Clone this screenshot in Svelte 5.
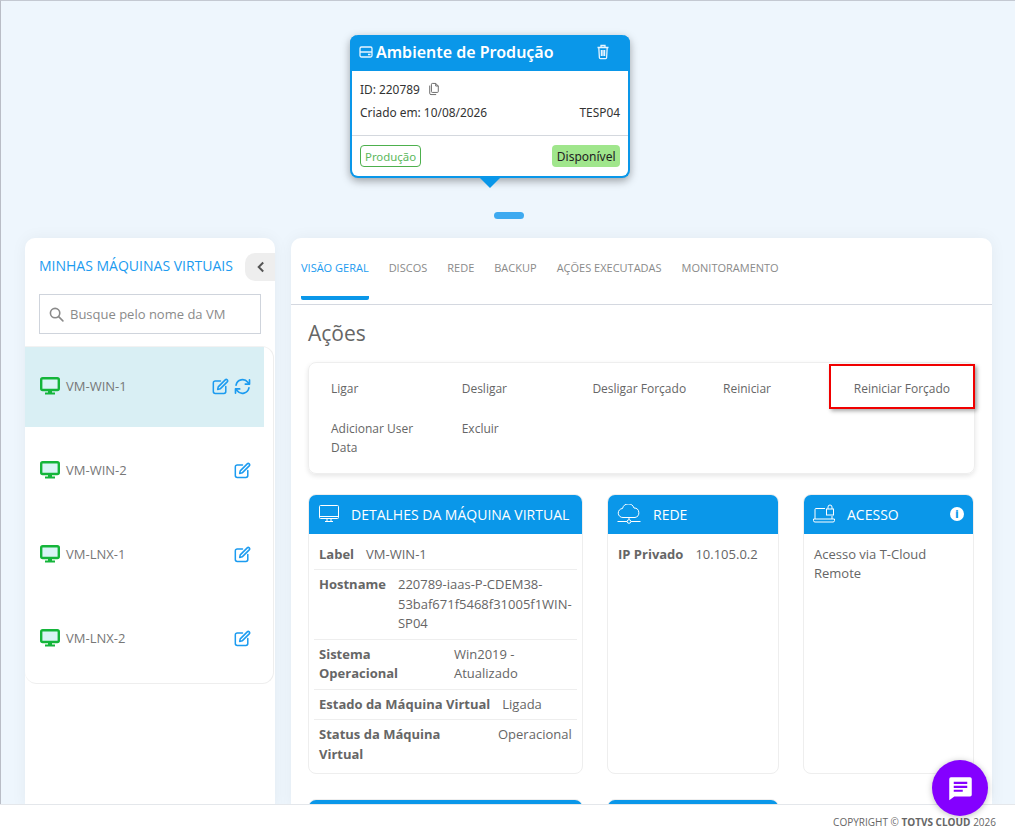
<script>
	const actions = ['Ligar', 'Desligar', 'Desligar Forçado', 'Reiniciar', 'Reiniciar Forçado', 'Adicionar User Data', 'Excluir'];
	const tabs = ['Visão Geral', 'Discos', 'Rede', 'Backup', 'Ações Executadas', 'Monitoramento'];
	const vms = ['VM-WIN-1', 'VM-WIN-2', 'VM-LNX-1', 'VM-LNX-2'];
</script>

{#snippet edit()}
	<svg class="ico" viewBox="0 0 18 18" fill="none" stroke="currentColor" stroke-width="1.6">
		<path d="M9 3.2H3.4A2 2 0 0 0 1.4 5.2v9.2a2 2 0 0 0 2 2h9.2a2 2 0 0 0 2-2V9" stroke-linecap="round" />
		<path d="M6.6 9.4 14 2a1.5 1.5 0 0 1 2.1 0 1.5 1.5 0 0 1 0 2.100L8.700 11.500l-2.700.6z" stroke-linejoin="round" />
	</svg>
{/snippet}

<div class="page">
	<main>
		<div class="env">
			<div class="env-head">
				<svg class="env-ico" viewBox="0 0 14 14" fill="none" stroke="currentColor" stroke-width="1.3">
					<rect x="1" y="2" width="12" height="10" rx="1.500" />
					<path d="M1 7h12M9 9.500h2.500" />
				</svg>
				<span class="env-title">Ambiente de Produção</span>
				<svg class="trash" viewBox="0 0 14 16" fill="none" stroke="currentColor" stroke-width="1.300">
					<path d="M1.500 3.500h11M5 3.200V1.500h4v1.700M2.800 3.500l.6 10.200a1 1 0 0 0 1 .9h5.200a1 1 0 0 0 1-.9l.6-10.200" />
					<path d="M5.400 6v6M7 6v6M8.600 6v6" />
				</svg>
			</div>
			<div class="env-body">
				<div class="env-line">
					<span>ID: 220789</span>
					<svg class="copy" viewBox="0 0 14 16" fill="none" stroke="currentColor" stroke-width="1.100">
						<path d="M5 1.500h4l3 3v6.500a1 1 0 0 1-1 1H5a1 1 0 0 1-1-1v-8.500a1 1 0 0 1 1-1z" />
						<path d="M9 1.500v3h3M2 4v9a1.500 1.500 0 0 0 1.500 1.500h6" />
					</svg>
				</div>
				<div class="env-line between"><span>Criado em: 10/08/2026</span><span>TESP04</span></div>
			</div>
			<div class="env-foot">
				<span class="tag">Produção</span>
				<span class="status">Disponível</span>
			</div>
			<div class="arrow"></div>
		</div>
		<div class="pill"></div>

		<div class="panels">
			<aside class="side">
				<div class="side-head">
					<h2>Minhas Máquinas Virtuais</h2>
					<button class="collapse" aria-label="Recolher">
						<svg viewBox="0 0 10 12" width="9" height="12" fill="none" stroke="currentColor" stroke-width="2.200"><path d="M8 1 3 6l5 5" /></svg>
					</button>
				</div>
				<div class="search">
					<svg viewBox="0 0 16 16" width="15" height="15" fill="none" stroke="currentColor" stroke-width="1.700"><circle cx="6.500" cy="6.500" r="5" /><path d="m10.300 10.300 4.500 4.500" stroke-linecap="round" /></svg>
					<span>Busque pelo nome da VM</span>
				</div>
				<ul class="vms">
					{#each vms as vm, i}
						<li class:active={i === 0}>
							<svg class="monitor" viewBox="0 0 20 18" fill="none">
								<rect x="1.200" y="1.200" width="17.600" height="11.800" rx="1.500" stroke="#14b53a" stroke-width="2.400" fill="#d9f4f6" />
								<path d="M8 14h4v2H8zM5 15.600h10v2H5z" fill="#14b53a" />
							</svg>
							<span class="vm-name">{vm}</span>
							<span class="vm-actions">
								{@render edit()}
								{#if i === 0}
									<svg class="ico" viewBox="0 0 18 18" fill="none" stroke="currentColor" stroke-width="1.800" stroke-linecap="round">
										<path d="M2.200 7.500A7 7 0 0 1 14.600 4.500L16 6.200" />
										<path d="M16.400 2v4.400H12" stroke-linejoin="round" />
										<path d="M15.800 10.500A7 7 0 0 1 3.400 13.500L2 11.800" />
										<path d="M1.600 16v-4.400H6" stroke-linejoin="round" />
									</svg>
								{/if}
							</span>
						</li>
					{/each}
				</ul>
			</aside>

			<section class="content">
				<nav class="tabs">
					{#each tabs as tab, i}
						<span class="tab" class:on={i === 0}>{tab}</span>
					{/each}
				</nav>
				<div class="inner">
					<h1>Ações</h1>
					<div class="actions">
						{#each actions as action}
							<span>{action}</span>
						{/each}
						<div class="highlight"></div>
					</div>

					<div class="cards">
						<div class="card">
							<header>
								<svg class="card-ico monitor-ico" viewBox="0 0 20 18" fill="none" stroke="currentColor"><rect x=".5" y=".5" width="19" height="13" rx="1" /><path d="M.5 11.500h19M8 14v2M12 14v2M6 16.500h8" /></svg>
								<span>Detalhes da Máquina Virtual</span>
							</header>
							<div class="rows">
								<div class="row"><b>Label</b><span>VM-WIN-1</span></div>
								<div class="row"><b>Hostname</b><span class="host">220789-iaas-P-CDEM38-53baf671f5468f31005f1WIN-SP04</span></div>
								<div class="row"><b class="so">Sistema Operacional</b><span class="so-val">Win2019 - Atualizado</span></div>
								<div class="row"><b>Estado da Máquina Virtual</b><span>Ligada</span></div>
								<div class="row"><b class="st">Status da Máquina Virtual</b><span>Operacional</span></div>
							</div>
						</div>
						<div class="card">
							<header>
								<svg class="card-ico cloud-ico" viewBox="0 0 24 20" fill="none" stroke="currentColor"><path d="M6 13.500a4.500 4.500 0 0 1-.5-9A6 6 0 0 1 17 4a4.800 4.800 0 0 1 1 9.500z" /><path d="M12 13.500v2M.5 17.500h9.500M14 17.500h9.500" /><circle cx="12" cy="17.500" r="1.800" /></svg>
								<span>Rede</span>
							</header>
							<div class="rows">
								<div class="row"><b>IP Privado</b><span>10.105.0.2</span></div>
							</div>
						</div>
						<div class="card">
							<header>
								<svg class="card-ico" viewBox="0 0 22 20" fill="none" stroke="currentColor"><path d="M2 15V5.500a1 1 0 0 1 1-1h9M19 12v3M.5 15h21v1.500a1.500 1.500 0 0 1-1.500 1.500H2a1.500 1.500 0 0 1-1.500-1.500z" /><rect x="13.500" y="5" width="7" height="6" /><path d="M15 5V3a2 2 0 0 1 4 0v2" /></svg>
								<span>Acesso</span>
								<span class="info">i</span>
							</header>
							<p class="plain">Acesso via T-Cloud Remote</p>
						</div>
						<div class="card stub"><header></header></div>
						<div class="card stub"><header></header></div>
					</div>
				</div>
			</section>
		</div>
	</main>

	<footer>COPYRIGHT © <b>TOTVS CLOUD</b> 2026</footer>

	<button class="chat" aria-label="Chat">
		<svg viewBox="0 0 24 24" width="27" height="27"><path fill="#fff" d="M3.500 2h17A1.500 1.500 0 0 1 22 3.500v14a1.500 1.500 0 0 1-1.500 1.500H6.500L2 22.500V3.500A1.500 1.500 0 0 1 3.500 2z" /><path fill="#8400ff" d="M6 6h12v2H6zM6 9.500h12v2H6zM6 13h8v1.800H6z" /></svg>
	</button>
</div>

<style>
	:global(body) {
		font-family: 'Open Sans', 'Liberation Sans', sans-serif;
		color: #666;
	}

	.page {
		position: relative;
		height: 839px;
		display: flex;
		flex-direction: column;
		overflow: hidden;
		background: #eef6fd;
	}

	main {
		flex: 1;
		min-height: 0;
		overflow: hidden;
		padding-top: 34px;
		border-top: 1px solid #c4c9d2;
		border-left: 1px solid #b9bdc6;
	}

	/* ambiente */
	.env {
		position: relative;
		width: 280px;
		height: 143px;
		margin-left: 349px;
		box-sizing: border-box;
		display: flex;
		flex-direction: column;
		background: #fff;
		border: 2px solid #0a97e9;
		border-top: none;
		border-radius: 8px;
		box-shadow: 0 3px 8px rgba(0, 0, 0, 0.35);
		font-family: 'Noto Sans', 'Open Sans', sans-serif;
		color: #333;
		font-size: 11.900px;
	}

	.env-head {
		height: 36px;
		flex: none;
		box-sizing: border-box;
		margin: 0 -2px;
		padding: 0 20px 2px 9px;
		display: flex;
		align-items: center;
		gap: 3px;
		background: #0a97e9;
		border-radius: 8px 8px 0 0;
		color: #e8f5ff;
	}

	.env-ico { width: 14px; height: 14px; }
	.env-title { flex: 1; font-size: 16px; font-weight: 600; color: #fff; }
	.trash { width: 14px; height: 16px; }

	.env-body {
		flex: 1;
		padding: 6.500px 8px 0;
		border-bottom: 1px solid #d4d8de;
	}

	.env-line {
		height: 23px;
		display: flex;
		align-items: center;
		gap: 8px;
	}

	.env-line.between { justify-content: space-between; }
	.copy { width: 12px; height: 14px; color: #666; }

	.env-foot {
		height: 40px;
		flex: none;
		box-sizing: border-box;
		padding: 0 8px;
		display: flex;
		align-items: center;
		justify-content: space-between;
		font-size: 11.400px;
	}

	.tag {
		height: 22px;
		box-sizing: border-box;
		padding: 0 4px;
		display: flex;
		align-items: center;
		border: 1px solid #4db04d;
		border-radius: 4px;
		color: #5cb85c;
	}

	.status {
		height: 22px;
		box-sizing: border-box;
		padding: 0 4.500px;
		display: flex;
		align-items: center;
		background: #a0e68c;
		border-radius: 4px;
		font-size: 12px;
		color: #222;
	}

	.arrow {
		position: absolute;
		left: 128px;
		bottom: -12px;
		border: 10px solid transparent;
		border-bottom: none;
		border-top-color: #0a97e9;
	}

	.pill {
		width: 30px;
		height: 7px;
		margin: 34px 0 19px 493px;
		background: #3eaaf0;
		border-radius: 4px;
	}

	/* paineis */
	.panels {
		display: flex;
		gap: 16px;
		margin-left: 24px;
		width: 967px;
		height: 570px;
	}

	.side, .content {
		background: #fff;
		border-radius: 10px 10px 0 0;
		box-shadow: 0 0 16px rgba(0, 0, 0, 0.05);
	}

	.side {
		width: 250px;
		flex: none;
	}

	.side-head {
		height: 56px;
		padding: 15px 0 0 14px;
		box-sizing: border-box;
		display: flex;
		align-items: flex-start;
		justify-content: space-between;
	}

	h2 {
		margin: 3px 0 0;
		font-size: 14px;
		font-weight: 400;
		text-transform: uppercase;
		white-space: nowrap;
		color: #1b9bf0;
	}

	.collapse {
		width: 30px;
		height: 28px;
		padding: 0;
		display: flex;
		align-items: center;
		justify-content: center;
		border: none;
		border-radius: 10px 0 0 10px;
		background: #eee;
		color: #555;
	}

	.search {
		height: 40px;
		margin: 0 14px;
		padding: 0 9px;
		box-sizing: border-box;
		display: flex;
		align-items: center;
		gap: 6px;
		border: 1px solid #cfd4dc;
		color: #8a8a8a;
		font-size: 13px;
	}

	.vms {
		list-style: none;
		margin: 12px 1px 0 0;
		padding: 0 0 4px;
		border: 1px solid #eeeeee;
		border-left: none;
		border-top-color: #f2f2f2;
		border-radius: 0 12px 12px 12px;
	}

	.vms li {
		height: 80px;
		box-sizing: border-box;
		padding: 0 22px 2px 15px;
		display: flex;
		align-items: center;
		gap: 6px;
		font-size: 13px;
		color: #777;
	}

	.vms li + li { margin-top: 4px; }

	.vms li.active {
		margin-right: 9px;
		padding-right: 13px;
		background: #d9eff4;
	}

	.monitor { width: 20px; height: 18px; flex: none; }
	.vm-name { flex: 1; }

	.vm-actions {
		display: flex;
		gap: 5px;
		color: #1b9bf0;
	}

	.ico { width: 17px; height: 17px; }

	/* conteudo */
	.content {
		flex: 1;
		min-width: 0;
		overflow: hidden;
	}

	.tabs {
		height: 67px;
		box-sizing: border-box;
		padding: 0 10px;
		display: flex;
		gap: 20px;
		border-bottom: 1px solid #d4d8e0;
	}

	.tab {
		height: 62px;
		box-sizing: border-box;
		padding-top: 22px;
		font-size: 11px;
		text-transform: uppercase;
		white-space: nowrap;
		color: #8a8a8a;
	}

	.tab.on {
		color: #1b9bf0;
		border-bottom: 4px solid #0a97e9;
		border-radius: 0 0 2px 2px;
	}

	.inner { padding: 0 17px 0 17px; }

	h1 {
		margin: 0;
		padding-top: 14px;
		height: 57px;
		box-sizing: border-box;
		font-size: 21px;
		font-weight: 400;
		color: #666;
	}

	.actions {
		position: relative;
		height: 112px;
		box-sizing: border-box;
		padding: 16px 0 0 22px;
		display: grid;
		grid-template-columns: repeat(5, 130.700px);
		grid-auto-rows: min-content;
		row-gap: 21px;
		border: 1px solid #eeeeee;
		border-radius: 8px;
		box-shadow: 0 2px 5px rgba(0, 0, 0, 0.1);
		font-size: 12px;
		line-height: 19px;
		color: #666;
	}

	.actions > span { padding-right: 30px; }
	.actions > span:nth-child(3), .actions > span:nth-child(5) { padding-right: 0; white-space: nowrap; }

	.highlight {
		position: absolute;
		top: 1px;
		right: -1px;
		width: 146px;
		height: 45px;
		box-sizing: border-box;
		border: 2px solid #f00000;
		box-shadow: 2px 2px 4px rgba(0, 0, 0, 0.35);
	}

	.cards {
		margin-top: 20px;
		display: grid;
		grid-template-columns: 275px 172px 171px;
		grid-auto-rows: 280px;
		column-gap: 24px;
		row-gap: 25px;
	}

	.card {
		border: 1px solid #eeeeee;
		border-radius: 8px;
		overflow: hidden;
	}

	.card header {
		height: 40px;
		margin: -1px -1px 0;
		padding: 0 10px;
		display: flex;
		align-items: center;
		gap: 12px;
		background: #0a97e9;
		color: #fff;
		font-size: 14px;
		text-transform: uppercase;
		white-space: nowrap;
	}

	.card-ico { width: 22px; height: 20px; flex: none; stroke-width: 1; }
	.monitor-ico { width: 20px; height: 18px; margin-left: 1px; }
	.cloud-ico { width: 24px; }

	.info {
		margin-left: auto;
		width: 14px;
		height: 14px;
		display: flex;
		align-items: center;
		justify-content: center;
		border-radius: 50%;
		background: #fff;
		color: #0a97e9;
		font-size: 10px;
		font-weight: 800;
		text-transform: none;
	}

	.rows { padding: 5.500px 5px 0; }

	.row {
		display: flex;
		gap: 12px;
		padding: 5px;
		border-bottom: 1px solid #eeeeee;
		font-size: 13px;
		line-height: 19.500px;
	}

	.row:last-child { border-bottom: none; }
	.row b { flex: none; font-weight: 700; color: #666; }
	.row .host { overflow-wrap: anywhere; margin-right: -3px; }
	.row .so { width: 123px; }
	.row .st { width: 167px; }
	.row .so-val { width: 100px; }

	.plain {
		margin: 0;
		padding: 10.500px 10px;
		font-size: 13px;
		line-height: 19.500px;
	}

	.stub:nth-child(4) { grid-column: 1; }

	footer {
		height: 35px;
		flex: none;
		box-sizing: border-box;
		padding: 10px 19px 0 0;
		position: relative;
		text-align: right;
		background: #fff;
		border-top: 1px solid #e4e7eb;
		font-size: 10px;
		color: #666;
	}

	.chat {
		position: absolute;
		left: 932px;
		top: 760px;
		width: 56px;
		height: 56px;
		padding: 0;
		display: flex;
		align-items: center;
		justify-content: center;
		border: none;
		border-radius: 50%;
		background: #8400ff;
		box-shadow: 0 1px 6px rgba(0, 0, 0, 0.25);
	}
</style>
